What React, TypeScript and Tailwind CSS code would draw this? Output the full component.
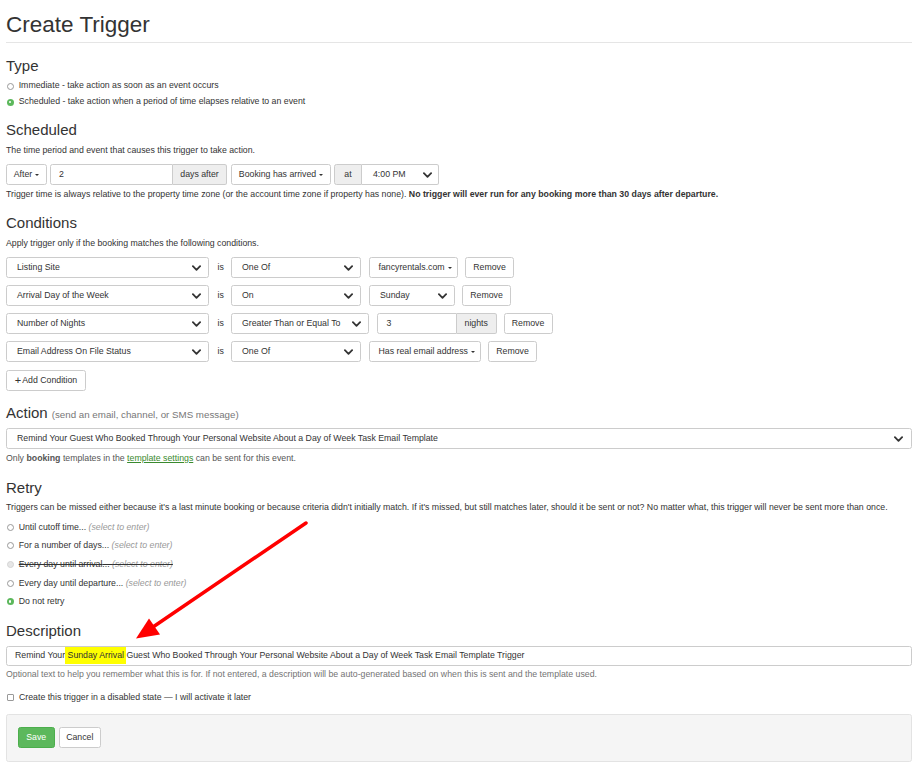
import React from "react";

/* ── Small building blocks ─────────────────────────────────────────────── */

function Chevron() {
  return (
    <svg width="9" height="6" viewBox="0 0 10 6" className="shrink-0">
      <path d="M1 1l4 4 4-4" fill="none" stroke="#333" strokeWidth="2" strokeLinecap="round" strokeLinejoin="round" />
    </svg>
  );
}

function Caret() {
  return <span className="ml-[3px] inline-block h-0 w-0 border-x-[2.5px] border-t-[2.5px] border-x-transparent border-t-[#333]" />;
}

function Radio({ state = "off" }: { state?: "off" | "on" | "disabled" }) {
  if (state === "on") {
    return (
      <span className="flex h-[7px] w-[7px] shrink-0 items-center justify-center rounded-full bg-[#5cb85c]">
        <span className="h-[2.5px] w-[2.5px] rounded-full bg-white" />
      </span>
    );
  }
  if (state === "disabled") {
    return <span className="h-[7px] w-[7px] shrink-0 rounded-full border border-[#d4d4d4] bg-[#e6e6e6]" />;
  }
  return <span className="h-[7px] w-[7px] shrink-0 rounded-full border border-[#999] bg-white" />;
}

function Heading({ children }: { children: React.ReactNode }) {
  return <h3 className="h-[17px] whitespace-nowrap text-[15px] leading-[17px] text-[#333]">{children}</h3>;
}

function Line({ className = "", children }: { className?: string; children: React.ReactNode }) {
  return <p className={`h-[13px] whitespace-nowrap leading-[13px] ${className}`}>{children}</p>;
}

function Select({ className = "", children }: { className?: string; children: React.ReactNode }) {
  return (
    <div className={`flex h-[21px] shrink-0 items-center justify-between rounded-[2.5px] border border-[#ccc] bg-white pl-[10px] pr-[7px] ${className}`}>
      <span className="whitespace-nowrap">{children}</span>
      <Chevron />
    </div>
  );
}

function Btn({ className = "", children }: { className?: string; children: React.ReactNode }) {
  return (
    <div className={`flex h-[21px] shrink-0 items-center whitespace-nowrap rounded-[2.5px] border border-[#ccc] bg-white ${className}`}>
      {children}
    </div>
  );
}

function RetryOption({ label, state = "off", strike = false }: { label: string; state?: "off" | "on" | "disabled"; strike?: boolean }) {
  return (
    <div className="flex h-[18.6px] items-center gap-[5px] pl-[0.7px]">
      <Radio state={state} />
      <span className={`whitespace-nowrap ${strike ? "line-through" : ""}`}>
        {label}... <i className={strike ? "text-[#999]" : "text-[#999]"}>(select to enter)</i>
      </span>
    </div>
  );
}

/* ── Condition rows ────────────────────────────────────────────────────── */

function ConditionRow({ field, op, opWidth = "w-[130px]", children }: { field: string; op: string; opWidth?: string; children: React.ReactNode }) {
  return (
    <div className="flex h-[21px] items-center">
      <Select className="w-[203px]">{field}</Select>
      <span className="ml-[8.5px] w-[13.5px]">is</span>
      <Select className={opWidth}>{op}</Select>
      {children}
    </div>
  );
}

function Remove() {
  return <Btn className="ml-[7px] w-[49px] justify-center">Remove</Btn>;
}

/* ── Page ──────────────────────────────────────────────────────────────── */

export default function App() {
  return (
    <div className="relative h-[768px] w-[918px] overflow-hidden bg-white px-[6px] font-['Liberation_Sans',Arial,sans-serif] text-[8.75px] text-[#333]">
      {/* ── Title ─────────────────────────────────────── */}
      <h1 className="mt-[12px] h-[25px] text-[22.5px] leading-[25px]">Create Trigger</h1>
      <div className="mt-[5px] h-px bg-[#e5e5e5]" />

      {/* ── Type ──────────────────────────────────────── */}
      <div className="mt-[14px]">
        <Heading>Type</Heading>
      </div>
      <div className="mt-[4px]">
        <div className="flex h-[16px] items-center gap-[5px] pl-[0.7px]">
          <Radio />
          <span className="whitespace-nowrap">Immediate - take action as soon as an event occurs</span>
        </div>
        <div className="flex h-[16px] items-center gap-[5px] pl-[0.7px]">
          <Radio state="on" />
          <span className="whitespace-nowrap">Scheduled - take action when a period of time elapses relative to an event</span>
        </div>
      </div>

      {/* ── Scheduled ─────────────────────────────────── */}
      <div className="mt-[11px]">
        <Heading>Scheduled</Heading>
      </div>
      <Line className="mt-[6px]">The time period and event that causes this trigger to take action.</Line>
      <div className="mt-[7px] flex h-[21px] items-center">
        <Btn className="w-[41px] justify-center">
          After
          <Caret />
        </Btn>
        <div className="ml-[3px] flex h-full">
          <div className="flex w-[123px] items-center rounded-l-[2.5px] border border-[#ccc] bg-white pl-[8px]">2</div>
          <div className="flex w-[54px] items-center justify-center rounded-r-[2.5px] border border-l-0 border-[#ccc] bg-[#eee]">days after</div>
        </div>
        <Btn className="ml-[4px] w-[100px] justify-center">
          Booking has arrived
          <Caret />
        </Btn>
        <div className="ml-[3px] flex h-full">
          <div className="flex w-[28px] items-center justify-center rounded-l-[2.5px] border border-[#ccc] bg-[#eee]">at</div>
          <div className="flex w-[77px] items-center justify-between rounded-r-[2.5px] border border-l-0 border-[#ccc] bg-white pl-[11px] pr-[6px]">
            <span>4:00 PM</span>
            <Chevron />
          </div>
        </div>
      </div>
      <Line className="mt-[3px]">
        Trigger time is always relative to the property time zone (or the account time zone if property has none).{" "}
        <b>No trigger will ever run for any booking more than 30 days after departure.</b>
      </Line>

      {/* ── Conditions ────────────────────────────────── */}
      <div className="mt-[13px]">
        <Heading>Conditions</Heading>
      </div>
      <Line className="mt-[6px]">Apply trigger only if the booking matches the following conditions.</Line>
      <div className="mt-[7px] flex flex-col gap-[7px]">
        <ConditionRow field="Listing Site" op="One Of">
          <Btn className="ml-[8px] w-[89px] pl-[8.5px]">
            fancyrentals.com
            <Caret />
          </Btn>
          <Remove />
        </ConditionRow>
        <ConditionRow field="Arrival Day of the Week" op="On">
          <Select className="ml-[8px] w-[86px]">Sunday</Select>
          <Remove />
        </ConditionRow>
        <ConditionRow field="Number of Nights" op="Greater Than or Equal To" opWidth="w-[138px]">
          <div className="ml-[8px] flex h-full">
            <div className="flex w-[80px] items-center rounded-l-[2.5px] border border-[#ccc] bg-white pl-[8.5px]">3</div>
            <div className="flex w-[39.5px] items-center justify-center rounded-r-[2.5px] border border-l-0 border-[#ccc] bg-[#eee]">nights</div>
          </div>
          <Remove />
        </ConditionRow>
        <ConditionRow field="Email Address On File Status" op="One Of">
          <Btn className="ml-[8px] w-[112px] pl-[8.5px]">
            Has real email address
            <Caret />
          </Btn>
          <Remove />
        </ConditionRow>
      </div>
      <Btn className="mt-[8px] w-[80px] justify-center">
        <span className="mr-[1px] text-[11px] leading-none">+</span>Add Condition
      </Btn>

      {/* ── Action ────────────────────────────────────── */}
      <div className="mt-[13px] flex h-[17px] items-baseline gap-[4px] whitespace-nowrap">
        <span className="text-[15px] leading-[17px]">Action</span>
        <span className="text-[9.75px] text-[#777]">(send an email, channel, or SMS message)</span>
      </div>
      <Select className="mt-[7px] w-full pl-[10.5px] pr-[8px]">
        Remind Your Guest Who Booked Through Your Personal Website About a Day of Week Task Email Template
      </Select>
      <Line className="mt-[3px] text-[#555]">
        Only <b>booking</b> templates in the <span className="text-[#3a8a2e] underline">template settings</span> can be sent for this event.
      </Line>

      {/* ── Retry ─────────────────────────────────────── */}
      <div className="mt-[14px]">
        <Heading>Retry</Heading>
      </div>
      <Line className="mt-[5px]">
        Triggers can be missed either because it's a last minute booking or because criteria didn't initially match. If it's missed, but still matches later, should it be sent or not? No matter what, this trigger will never be sent more than once.
      </Line>
      <div className="mt-[4px]">
        <RetryOption label="Until cutoff time" />
        <RetryOption label="For a number of days" />
        <RetryOption label="Every day until arrival" state="disabled" strike />
        <RetryOption label="Every day until departure" />
        <div className="flex h-[18.6px] items-center gap-[5px] pl-[0.7px]">
          <Radio state="on" />
          <span>Do not retry</span>
        </div>
      </div>

      {/* ── Description ───────────────────────────────── */}
      <div className="mt-[11px]">
        <Heading>Description</Heading>
      </div>
      <div className="mt-[7px] flex h-[20px] items-center whitespace-nowrap rounded-[2.5px] border border-[#ccc] bg-white pl-[8px]">
        Remind Your
        <span className="inline-block h-[17px] bg-[#ffff00] leading-[17px] whitespace-pre"> Sunday Arrival </span>
        Guest Who Booked Through Your Personal Website About a Day of Week Task Email Template Trigger
      </div>
      <Line className="mt-[2.5px] text-[#737373]">
        Optional text to help you remember what this is for. If not entered, a description will be auto-generated based on when this is sent and the template used.
      </Line>
      <div className="mt-[10px] flex h-[13px] items-center gap-[5px] pl-[1px]">
        <span className="h-[7px] w-[7px] shrink-0 rounded-[1px] border border-[#999] bg-white" />
        <span className="whitespace-nowrap">Create this trigger in a disabled state — I will activate it later</span>
      </div>

      {/* ── Footer ────────────────────────────────────── */}
      <div className="mt-[9.5px] flex h-[48px] items-start gap-[4px] rounded-[2.5px] border border-[#e3e3e3] bg-[#f5f5f5] pl-[11px] pt-[12px]">
        <div className="flex h-[21px] w-[36.5px] items-center justify-center rounded-[2.5px] border border-[#4cae4c] bg-[#5cb85c] text-white">Save</div>
        <Btn className="w-[42.5px] justify-center">Cancel</Btn>
      </div>

      {/* ── Annotation arrow ──────────────────────────── */}
      <svg className="pointer-events-none absolute left-0 top-0" width="918" height="768">
        <line x1="306" y1="523" x2="153" y2="627" stroke="#ff0000" strokeWidth="3.5" strokeLinecap="round" />
        <polygon points="136,638.5 149,618.5 160,634.5" fill="#ff0000" />
      </svg>
    </div>
  );
}
